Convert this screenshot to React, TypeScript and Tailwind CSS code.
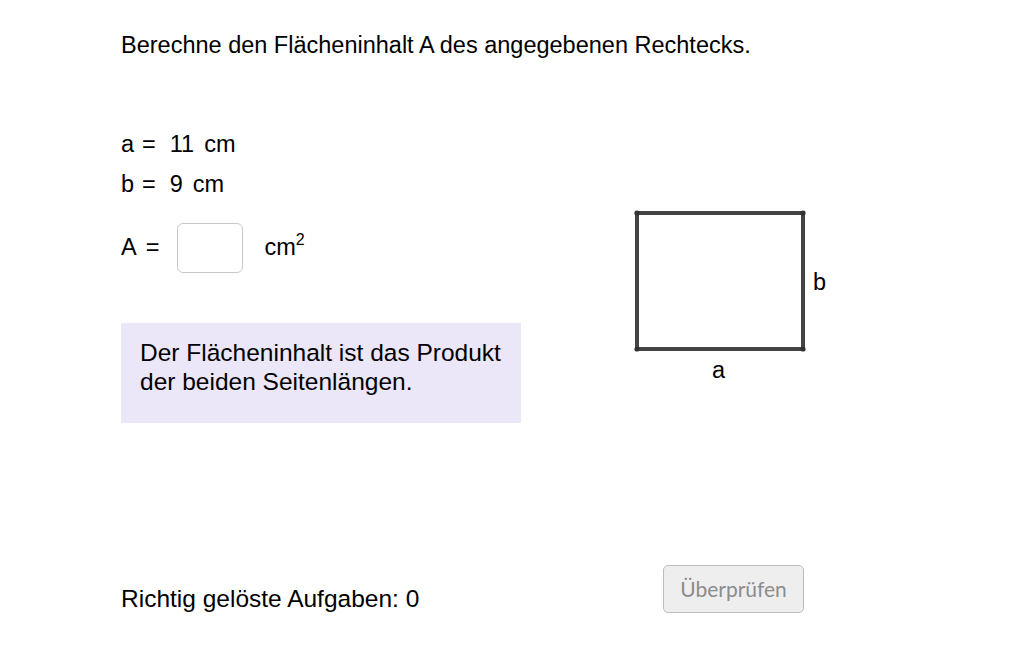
import React, { useState } from 'react';

const texFont = { fontFamily: '"Liberation Sans", Arial, sans-serif' };

function Rectangle() {
  return (
    <svg width="200" height="180" viewBox="630 205 200 180" className="block">
      <g stroke="#444444" strokeWidth="4" strokeLinecap="round" fill="none">
        <rect x="637" y="213" width="166" height="136" />
      </g>
      {[
        [637, 213],
        [803, 213],
        [803, 349],
        [637, 349],
      ].map(([cx, cy], i) => (
        <circle key={i} cx={cx} cy={cy} r="2.6" fill="#333333" />
      ))}
      <text x="813" y="290" fontSize="23.5" fill="#000" style={texFont}>
        b
      </text>
      <text x="712" y="378" fontSize="23.5" fill="#000" style={texFont}>
        a
      </text>
    </svg>
  );
}

function Given({ name, value }: { name: string; value: string }) {
  return (
    <div className="flex">
      <span className="w-[10px]">{name}</span>
      <span className="ml-[11px]">=</span>
      <span className="ml-[14px]">{value}</span>
      <span className="ml-[10px]">cm</span>
    </div>
  );
}

export default function App() {
  const [value, setValue] = useState('');

  return (
    <div className="w-[1032px] h-[645px] bg-white text-black overflow-hidden" style={texFont}>
      <div className="pl-[121px] pt-[31px]">
        <h1 className="text-[23.5px] leading-[28px] font-normal">
          Berechne den Flächeninhalt A des angegebenen Rechtecks.
        </h1>

        <div className="flex">
          {/* Aufgabe */}
          <div className="w-[400px] pt-[65px]">
            <div className="text-[23.5px] leading-[40px]">
              <Given name="a" value="11" />
              <Given name="b" value="9" />
            </div>

            <div className="flex items-center mt-[19px] text-[23.5px]">
              <span>A</span>
              <span className="ml-[9px]">=</span>
              <input
                value={value}
                onChange={(e) => setValue(e.target.value)}
                className="ml-[18px] w-[66px] h-[50px] rounded-[6px] border border-[#c8c8c8] bg-white outline-none px-2 text-[20px]"
              />
              <span className="ml-[21px]">
                cm
                <span className="inline-block relative -top-[10px] text-[16px] leading-none">2</span>
              </span>
            </div>

            <div className="mt-[50px] w-[400px] h-[100px] bg-[#ebe6f8] pl-[19px] pt-[15px] text-[24.5px] leading-[29px]">
              Der Flächeninhalt ist das Produkt
              <br />
              der beiden Seitenlängen.
            </div>
          </div>

          {/* Skizze */}
          <div className="ml-[109px] mt-[146px]">
            <Rectangle />
          </div>
        </div>

        <div className="flex items-end mt-[142px] w-[683px] justify-between">
          <div className="text-[24.5px] leading-[28px]">Richtig gelöste Aufgaben: 0</div>
          <button
            className="w-[141px] h-[48px] rounded-[5px] border border-[#bdbdbd] bg-[#eeeeee] text-[#8c8c8c] text-[21px]"
            style={{ fontFamily: 'Lato, "Open Sans", sans-serif' }}
          >
            Überprüfen
          </button>
        </div>
      </div>
    </div>
  );
}
